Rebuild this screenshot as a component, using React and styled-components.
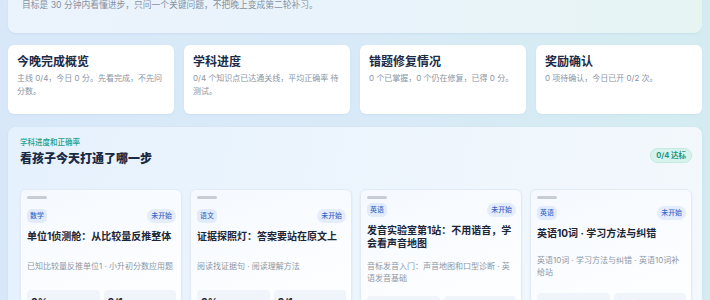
import React from "react";
import styled, { createGlobalStyle } from "styled-components";

const GlobalStyle = createGlobalStyle`
  html, body {
    margin: 0;
    min-height: 100%;
  }
  body {
    background: linear-gradient(90deg, #d8e8f9 0%, #d8eaf7 50%, #d4ecf1 100%);
    font-family: "Inter", "Noto Sans CJK SC", sans-serif;
    -webkit-font-smoothing: antialiased;
  }
`;

const Page = styled.main`
  display: flex;
  flex-direction: column;
  padding: 0 8px 20px;
`;

const Hero = styled.header`
  padding: 0 14px 23px;
  border-radius: 0 0 8px 8px;
  background: linear-gradient(90deg, #ebf3fd 0%, #e9f3fb 55%, #e6f4f2 100%);
  box-shadow: 0 1px 2px rgba(110, 150, 190, 0.12);
`;

const HeroText = styled.p`
  margin: 0;
  font-size: 8.75px;
  line-height: 10px;
  color: #8691a2;
`;

const StatGrid = styled.div`
  display: grid;
  grid-template-columns: repeat(4, 1fr);
  gap: 10px;
  margin-top: 12px;
`;

const StatCard = styled.div`
  box-sizing: border-box;
  height: 69px;
  padding: 9px 9px 0;
  border-radius: 6px;
  background: #ffffff;
  box-shadow: 0 1px 2px rgba(110, 150, 190, 0.1);
`;

const StatTitle = styled.h3`
  margin: 0;
  font-size: 12px;
  line-height: 16px;
  font-weight: 700;
  color: #1b2b46;
`;

const StatText = styled.p`
  margin: 2px 0 0;
  font-size: 8px;
  line-height: 13px;
  color: #8a94a4;
`;

const Section = styled.section`
  margin-top: 13px;
  padding: 11px 10px 14px 12px;
  border-radius: 8px;
  background: linear-gradient(100deg, #e5f1fd 0%, #edf5fd 50%, #f3f8fc 100%);
  box-shadow: 0 1px 3px rgba(110, 150, 190, 0.12);
`;

const SectionHead = styled.div`
  display: flex;
  justify-content: space-between;
  align-items: center;
`;

const Eyebrow = styled.div`
  font-size: 7.5px;
  line-height: 10px;
  font-weight: 500;
  color: #22a08b;
`;

const Heading = styled.h2`
  margin: 3px 0 0;
  font-size: 12px;
  line-height: 16px;
  font-weight: 800;
  color: #1a2a44;
`;

const Badge = styled.span`
  box-sizing: border-box;
  height: 15px;
  margin-top: 5px;
  padding: 0 5px;
  border: 1px solid #c3e9e0;
  border-radius: 8px;
  background: #d8f3ed;
  font-size: 7.5px;
  line-height: 13px;
  font-weight: 700;
  color: #1c9580;
`;

const LessonGrid = styled.div`
  display: grid;
  grid-template-columns: repeat(4, 1fr);
  gap: 8px;
  margin-top: 22px;
`;

const LessonCard = styled.article`
  display: flex;
  flex-direction: column;
  box-sizing: border-box;
  padding: 6px 5px 10px 6px;
  border: 1px solid #e1eaf5;
  border-radius: 6px;
  background: linear-gradient(160deg, #f5f9ff 0%, #fbfdff 55%, #ffffff 100%);
  box-shadow: 0 1px 3px rgba(100, 140, 190, 0.08);
`;

const Grip = styled.div`
  width: 20px;
  height: 3px;
  margin-bottom: 4px;
  border-radius: 2px;
  background: #c6cdd7;
`;

const LessonBody = styled.div`
  flex: 1;
  display: flex;
  flex-direction: column;
  justify-content: space-evenly;
`;

const ChipRow = styled.div`
  display: flex;
  justify-content: space-between;
`;

const Chip = styled.span`
  height: 14px;
  padding: 0 ${(p) => (p.$pill ? 4 : 3)}px;
  border-radius: ${(p) => (p.$pill ? 7 : 5)}px;
  background: ${(p) => (p.$pill ? "#e4edfc" : "#e1ebfb")};
  font-size: 6.9px;
  line-height: 14px;
  font-weight: 500;
  color: #3467c8;
`;

const LessonTitle = styled.h4`
  margin: 7px 0 0;
  font-size: 10px;
  line-height: 13px;
  font-weight: 700;
  color: #1c2535;
`;

const LessonDesc = styled.p`
  margin: 10px 0 0;
  font-size: 8px;
  line-height: 12px;
  color: #8d97a5;
`;

const Metrics = styled.div`
  display: grid;
  grid-template-columns: 1fr 1fr;
  gap: 4px;
  margin-top: 12px;
`;

const Metric = styled.div`
  padding: 6px 4px 5px;
  border-radius: 4px;
  background: #f0f5fb;
`;

const MetricValue = styled.div`
  font-size: 10px;
  line-height: 12px;
  font-weight: 700;
  color: ${(p) => (p.$pending ? "#5b6678" : "#1c2535")};
`;

const MetricLabel = styled.div`
  margin-top: 3px;
  font-size: 7px;
  line-height: 9px;
  color: #97a0ad;
`;

const stats = [
  { title: "今晚完成概览", text: "主线 0/4，今日 0 分。先看完成，不先问分数。" },
  { title: "学科进度", text: "0/4 个知识点已达通关线，平均正确率 待测试。" },
  { title: "错题修复情况", text: "0 个已掌握，0 个仍在修复，已得 0 分。" },
  { title: "奖励确认", text: "0 项待确认，今日已开 0/2 次。" },
];

const lessons = [
  {
    subject: "数学",
    title: "单位1侦测舱：从比较量反推整体",
    desc: "已知比较量反推单位1 · 小升初分数应用题",
    metrics: ["0%", "0/1"],
  },
  {
    subject: "语文",
    title: "证据探照灯：答案要站在原文上",
    desc: "阅读找证据句 · 阅读理解方法",
    metrics: ["0%", "0/1"],
  },
  {
    subject: "英语",
    title: "发音实验室第1站：不用谐音，学会看声音地图",
    desc: "音标发音入门：声音地图和口型诊断 · 英语发音基础",
    metrics: ["待测评", "待测评"],
    pending: true,
  },
  {
    subject: "英语",
    title: "英语10词 · 学习方法与纠错",
    desc: "英语10词 · 学习方法与纠错 · 英语10词补给站",
    metrics: ["待测评", "待测评"],
    pending: true,
  },
];

function App() {
  return (
    <>
      <GlobalStyle />
      <Page>
        <Hero>
          <HeroText>目标是 30 分钟内看懂进步，只问一个关键问题，不把晚上变成第二轮补习。</HeroText>
        </Hero>

        <StatGrid>
          {stats.map((s) => (
            <StatCard key={s.title}>
              <StatTitle>{s.title}</StatTitle>
              <StatText>{s.text}</StatText>
            </StatCard>
          ))}
        </StatGrid>

        <Section>
          <SectionHead>
            <div>
              <Eyebrow>学科进度和正确率</Eyebrow>
              <Heading>看孩子今天打通了哪一步</Heading>
            </div>
            <Badge>0/4 达标</Badge>
          </SectionHead>

          <LessonGrid>
            {lessons.map((l) => (
              <LessonCard key={l.title}>
                <Grip />
                <LessonBody>
                  <div>
                    <ChipRow>
                      <Chip>{l.subject}</Chip>
                      <Chip $pill>未开始</Chip>
                    </ChipRow>
                    <LessonTitle>{l.title}</LessonTitle>
                  </div>
                  <LessonDesc>{l.desc}</LessonDesc>
                  <Metrics>
                    <Metric>
                      <MetricValue $pending={l.pending}>{l.metrics[0]}</MetricValue>
                      <MetricLabel>正确率</MetricLabel>
                    </Metric>
                    <Metric>
                      <MetricValue $pending={l.pending}>{l.metrics[1]}</MetricValue>
                      <MetricLabel>完成题数</MetricLabel>
                    </Metric>
                  </Metrics>
                </LessonBody>
              </LessonCard>
            ))}
          </LessonGrid>
        </Section>
      </Page>
    </>
  );
}

export default App;
